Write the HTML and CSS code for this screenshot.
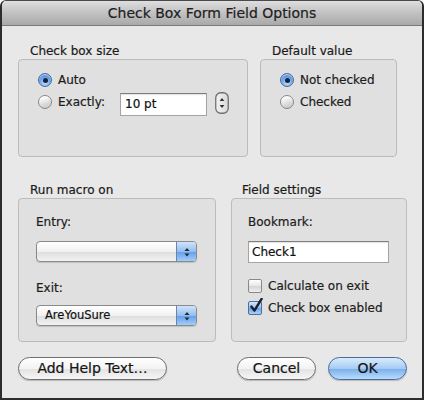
FILE: index.html
```html
<!DOCTYPE html>
<html>
<head>
<meta charset="utf-8">
<link rel="stylesheet" href="styles.css">
</head>
<body>
<div class="window">
  <div class="titlebar">Check Box Form Field Options</div>
  <div class="content">
    <div class="row row-top">
      <section class="group g-size">
        <div class="glabel">Check box size</div>
        <div class="gbox box-size">
          <div class="opt"><span class="radio on"></span><span>Auto</span></div>
          <div class="exact-row">
            <div class="opt opt-exact"><span class="radio"></span><span>Exactly:</span></div>
            <div class="textfield tf-size">10 pt</div>
            <svg class="stepper" width="14" height="22" viewBox="0 0 14 22">
              <defs>
                <linearGradient id="sg" x1="0" y1="0" x2="1" y2="0">
                  <stop offset="0" stop-color="#f4f4f4"/>
                  <stop offset="1" stop-color="#d9d9d9"/>
                </linearGradient>
              </defs>
              <rect x="0.75" y="0.75" width="12.5" height="20.5" rx="5" fill="url(#sg)" stroke="#6f6f6f" stroke-width="1.3"/>
              <path d="M4.6 9 L7 6 L9.4 9 Z" fill="#333"/>
              <path d="M4.6 13 L7 16 L9.4 13 Z" fill="#333"/>
            </svg>
          </div>
        </div>
      </section>
      <section class="group g-default">
        <div class="glabel">Default value</div>
        <div class="gbox box-default">
          <div class="opt"><span class="radio on"></span><span>Not checked</span></div>
          <div class="opt"><span class="radio"></span><span>Checked</span></div>
        </div>
      </section>
    </div>
    <div class="row row-bottom">
      <section class="group g-macro">
        <div class="glabel">Run macro on</div>
        <div class="gbox box-macro">
          <div class="flabel">Entry:</div>
          <div class="popup"><span class="popup-text"></span><span class="popup-arrows"><svg width="8" height="12" viewBox="0 0 8 12"><path d="M1.5 5 L4 2 L6.5 5 Z" fill="#1d2a3f"/><path d="M1.5 7.5 L4 10.5 L6.5 7.5 Z" fill="#1d2a3f"/></svg></span></div>
          <div class="flabel flabel-exit">Exit:</div>
          <div class="popup popup-exit"><span class="popup-text">AreYouSure</span><span class="popup-arrows"><svg width="8" height="12" viewBox="0 0 8 12"><path d="M1.5 5 L4 2 L6.5 5 Z" fill="#1d2a3f"/><path d="M1.5 7.5 L4 10.5 L6.5 7.5 Z" fill="#1d2a3f"/></svg></span></div>
        </div>
      </section>
      <section class="group g-field">
        <div class="glabel">Field settings</div>
        <div class="gbox box-field">
          <div class="flabel">Bookmark:</div>
          <div class="textfield tf-bookmark">Check1</div>
          <div class="opt chk-row"><span class="checkbox"></span><span>Calculate on exit</span></div>
          <div class="opt chk-row chk-row2"><span class="checkbox on"><svg class="checkmark" width="14" height="16" viewBox="0 0 14 16"><path d="M2.3 8.6 L5.4 12.6 L12.6 0.8" fill="none" stroke="#1a1f2a" stroke-width="2.4" stroke-linecap="round" stroke-linejoin="round"/></svg></span><span>Check box enabled</span></div>
        </div>
      </section>
    </div>
    <div class="buttons">
      <div class="btn btn-help">Add Help Text…</div>
      <div class="btn-right">
        <div class="btn btn-cancel">Cancel</div>
        <div class="btn btn-ok">OK</div>
      </div>
    </div>
  </div>
</div>
</body>
</html>
```

FILE: styles.css
```css
html, body {
  margin: 0;
  padding: 0;
  background: #ffffff;
}

body {
  font-family: "DejaVu Sans", "Liberation Sans", sans-serif;
  color: #1c1c1c;
  font-size: 12px;
  -webkit-text-stroke: 0.2px currentColor;
}

.window {
  box-sizing: border-box;
  width: 424px;
  height: 400px;
  border: 2px solid #2c2c2c;
  border-top: 1px solid #4a4a4a;
  border-radius: 6px 6px 0 0;
  background: #e8e8e8;
  overflow: hidden;
}

.titlebar {
  height: 24px;
  line-height: 25px;
  text-align: center;
  font-size: 14px;
  color: #1e1e1e;
  background: linear-gradient(#dedede, #c4c4c4 45%, #a9a9a9);
  border-bottom: 1px solid #7a7a7a;
}

.content {
  padding: 18px 15px 0 16px;
}

.row {
  display: flex;
  align-items: flex-start;
}

.row-top {
  gap: 12px;
}

.row-bottom {
  gap: 15px;
  margin-top: 26px;
}

.glabel {
  line-height: 15px;
  height: 15px;
  padding-left: 12px;
  color: #1a1a1a;
}

.g-field .glabel {
  padding-left: 11px;
}

.gbox {
  box-sizing: border-box;
  border: 1px solid #bcbcbc;
  border-radius: 4px;
  background: #e0e0e0;
}

.g-size { width: 230px; }
.g-default { width: 137px; }
.g-macro { width: 198px; }
.g-field { width: 176px; }

.box-size, .box-default {
  height: 98px;
  padding: 11px 0 0 19px;
  display: flex;
  flex-direction: column;
  gap: 4px;
}

.opt {
  display: flex;
  align-items: center;
  gap: 6px;
  height: 18px;
  line-height: 18px;
}

.radio {
  box-sizing: border-box;
  width: 14px;
  height: 14px;
  border-radius: 50%;
  border: 1px solid #878787;
  background: linear-gradient(160deg, #ffffff 15%, #dcdcdc 60%, #c4c4c4);
  box-shadow: inset 0 1px 1px rgba(255,255,255,0.8);
  flex: none;
  position: relative;
}

.radio.on {
  border-color: #4a6a9c;
  background: radial-gradient(circle at 50% 75%, #bfe0ff 0%, #74aaec 45%, #3778d2 85%);
}

.radio.on::after {
  content: "";
  position: absolute;
  left: 3.5px;
  top: 3.5px;
  width: 5px;
  height: 5px;
  border-radius: 50%;
  background: #16233a;
}

.exact-row {
  display: flex;
  align-items: flex-start;
}

.opt-exact {
  width: 82px;
}

.textfield {
  box-sizing: border-box;
  background: #ffffff;
  border: 1px solid #a4a4a4;
  border-top-color: #7e7e7e;
  box-shadow: inset 0 1px 1px rgba(0,0,0,0.12);
  padding-left: 4px;
  color: #111;
}

.tf-size {
  width: 87px;
  height: 23px;
  line-height: 21px;
}

.stepper {
  margin-left: 8px;
  margin-top: -1px;
  display: block;
}

.box-macro, .box-field {
  height: 144px;
  padding: 16px 0 0 17px;
}

.box-field {
  padding-left: 16px;
}

.flabel {
  line-height: 15px;
  height: 15px;
}

.popup {
  box-sizing: border-box;
  width: 161px;
  height: 21px;
  margin-top: 11px;
  display: flex;
  border: 1px solid #8a8a8a;
  border-radius: 4px;
  overflow: hidden;
  background: linear-gradient(#ffffff, #f1f1f1 50%, #dedede 51%, #f2f2f2);
  box-shadow: 0 1px 1px rgba(0,0,0,0.15);
}

.popup-text {
  flex: 1;
  padding-left: 8px;
  line-height: 19px;
  font-size: 11.5px;
  color: #111;
}

.popup-arrows {
  width: 19px;
  display: flex;
  align-items: center;
  justify-content: center;
  border-left: 1px solid #6a84ad;
  background: linear-gradient(#cfe4fb, #94bef0 50%, #649ee6 51%, #a2cdfb);
}

.flabel-exit {
  margin-top: 19px;
}

.popup-exit {
  margin-top: 9px;
}

.tf-bookmark {
  width: 141px;
  height: 22px;
  line-height: 20px;
  margin-top: 11px;
  padding-left: 3px;
}

.chk-row {
  margin-top: 14px;
}

.chk-row2 {
  margin-top: 4px;
}

.checkbox {
  box-sizing: border-box;
  width: 14px;
  height: 14px;
  border: 1px solid #888;
  border-radius: 2px;
  background: linear-gradient(#ffffff, #e6e6e6 50%, #d4d4d4 51%, #efefef);
  flex: none;
  position: relative;
}

.checkbox.on {
  border-color: #4d6e9e;
  background: linear-gradient(#d4e8fd, #93c0f1 50%, #6aa3e6 51%, #a9d2fb);
}

.checkmark {
  position: absolute;
  left: 0;
  top: -4px;
}

.buttons {
  margin-top: 15px;
  display: flex;
  justify-content: space-between;
  align-items: center;
}

.btn-right {
  display: flex;
  gap: 12px;
}

.btn {
  box-sizing: border-box;
  height: 23px;
  line-height: 21px;
  border: 1px solid #6e6e6e;
  border-radius: 12px;
  text-align: center;
  font-size: 14px;
  color: #151515;
  background: linear-gradient(#ffffff, #f3f3f3 50%, #e2e2e2 51%, #f6f6f6);
  box-shadow: 0 1px 1px rgba(0,0,0,0.2);
}

.btn-help { width: 149px; }
.btn-cancel { width: 79px; }

.btn-ok {
  width: 79px;
  border-color: #4b6a9a;
  background: linear-gradient(#d9ebfd, #a6cbf3 50%, #78aeea 51%, #b9dcfd);
}
```
